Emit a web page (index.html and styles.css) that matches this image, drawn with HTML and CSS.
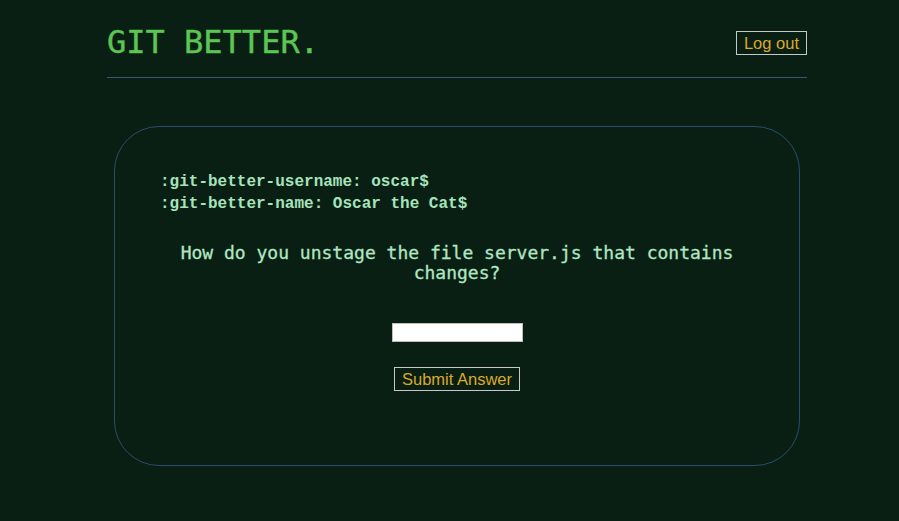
FILE: index.html
```html
<!DOCTYPE html>
<html>
<head>
<meta charset="utf-8">
<link rel="stylesheet" href="styles.css">
</head>
<body>
<div class="page">
  <header class="header">
    <h1 class="logo">GIT BETTER.</h1>
    <button class="btn">Log out</button>
  </header>
  <main class="card">
    <div class="prompt">
      <div>:git-better-username: oscar$</div>
      <div>:git-better-name: Oscar the Cat$</div>
    </div>
    <p class="question">How do you unstage the file server.js that contains changes?</p>
    <form class="answer">
      <input class="field" type="text">
      <button class="btn" type="button">Submit Answer</button>
    </form>
  </main>
</div>
</body>
</html>
```
FILE: styles.css
```css
html, body {
  margin: 0;
  padding: 0;
  background: #0a1f14;
}
.page {
  width: 700px;
  margin-left: 107px;
}
.header {
  display: flex;
  align-items: center;
  justify-content: space-between;
  height: 77px;
  border-bottom: 1px solid #36566a;
}
.logo {
  margin: 0;
  font-family: "DejaVu Sans Mono", monospace;
  font-weight: normal;
  font-size: 32px;
  color: #5cc553;
  line-height: 1;
  margin-top: 7px;
  -webkit-text-stroke: 0.4px #5cc553;
}
.btn {
  font-family: "Liberation Sans", Arial, sans-serif;
  font-size: 16.5px;
  color: #d9a92c;
  background: transparent;
  border: 1px solid #c8c8c8;
  padding: 2px 7px 1px;
  line-height: 19px;
  cursor: pointer;
}
.header .btn {
  margin-top: 8px;
}
.card {
  margin: 48px 7px 0;
  border: 1px solid #2a4c6a;
  border-radius: 45px;
  padding: 44px 45px 0;
  box-sizing: border-box;
  height: 340px;
}
.prompt {
  font-family: "Liberation Mono", "Courier New", monospace;
  font-weight: bold;
  font-size: 16px;
  line-height: 22px;
  color: #a6e4bc;
}
.question {
  margin: 28px 0 0;
  text-align: center;
  font-family: "DejaVu Sans Mono", monospace;
  font-size: 18px;
  line-height: 20px;
  color: #b0e6c2;
  -webkit-text-stroke: 0.3px #b0e6c2;
}
.answer {
  display: flex;
  flex-direction: column;
  align-items: center;
  gap: 25px;
  margin-top: 40px;
}
.field {
  width: 131px;
  height: 19px;
  box-sizing: border-box;
  border: 1px solid #bdbdbd;
  background: #fff;
  padding: 0;
}
```
